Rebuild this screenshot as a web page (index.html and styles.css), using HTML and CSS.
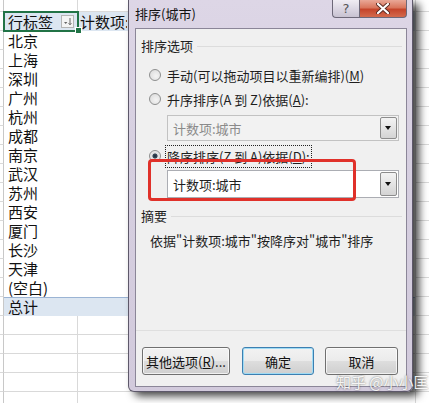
FILE: index.html
```html
<!DOCTYPE html>
<html lang="zh-CN">
<head>
    <meta charset="UTF-8">
    <title>排序(城市)</title>
    <link rel="stylesheet" href="styles.css">
</head>
<body>
    <div class="sheet">
        <div class="row grid top"><div class="c0"></div><div class="ca"></div><div class="cb"></div><div class="cc"></div></div>
        <div class="row head">
            <div class="c0"></div>
            <div class="ca sel">行标签
                <span class="filter">
                    <svg width="13" height="13" viewBox="0 0 13 13">
                        <rect x="0.5" y="0.5" width="12" height="12" fill="#f4f4f4" stroke="#b5b5b5"/>
                        <path d="M3 7h3.4L4.7 9z" fill="#666"/>
                        <path d="M9 3v6.5M7.6 8.2L9 9.8l1.4-1.6" stroke="#666" fill="none"/>
                    </svg>
                </span>
            </div>
            <div class="cb"><span class="clip">计数项:</span></div><div class="cc"></div>
        </div>
        <div class="row item"><div class="c0"></div><div class="ca">北京</div><div class="cb"></div><div class="cc"></div></div>
        <div class="row item"><div class="c0"></div><div class="ca">上海</div><div class="cb"></div><div class="cc"></div></div>
        <div class="row item"><div class="c0"></div><div class="ca">深圳</div><div class="cb"></div><div class="cc"></div></div>
        <div class="row item"><div class="c0"></div><div class="ca">广州</div><div class="cb"></div><div class="cc"></div></div>
        <div class="row item"><div class="c0"></div><div class="ca">杭州</div><div class="cb"></div><div class="cc"></div></div>
        <div class="row item"><div class="c0"></div><div class="ca">成都</div><div class="cb"></div><div class="cc"></div></div>
        <div class="row item"><div class="c0"></div><div class="ca">南京</div><div class="cb"></div><div class="cc"></div></div>
        <div class="row item"><div class="c0"></div><div class="ca">武汉</div><div class="cb"></div><div class="cc"></div></div>
        <div class="row item"><div class="c0"></div><div class="ca">苏州</div><div class="cb"></div><div class="cc"></div></div>
        <div class="row item"><div class="c0"></div><div class="ca">西安</div><div class="cb"></div><div class="cc"></div></div>
        <div class="row item"><div class="c0"></div><div class="ca">厦门</div><div class="cb"></div><div class="cc"></div></div>
        <div class="row item"><div class="c0"></div><div class="ca">长沙</div><div class="cb"></div><div class="cc"></div></div>
        <div class="row item"><div class="c0"></div><div class="ca">天津</div><div class="cb"></div><div class="cc"></div></div>
        <div class="row item"><div class="c0"></div><div class="ca">(空白)</div><div class="cb"></div><div class="cc"></div></div>
        <div class="row total"><div class="c0"></div><div class="ca">总计</div><div class="cb"></div><div class="cc"></div></div>
        <div class="row grid"><div class="c0"></div><div class="ca"></div><div class="cb"></div><div class="cc"></div></div>
        <div class="row grid"><div class="c0"></div><div class="ca"></div><div class="cb"></div><div class="cc"></div></div>
        <div class="row grid"><div class="c0"></div><div class="ca"></div><div class="cb"></div><div class="cc"></div></div>
        <div class="row grid"><div class="c0"></div><div class="ca"></div><div class="cb"></div><div class="cc"></div></div>
        <div class="row grid"><div class="c0"></div><div class="ca"></div><div class="cb"></div><div class="cc"></div></div>
    </div>

    <div class="dialog">
        <div class="titlebar">
            <span class="title">排序(城市)</span>
            <div class="caps">
                <span class="cap-help">?</span>
                <span class="cap-close">
                    <svg width="14" height="11" viewBox="0 0 14 11">
                        <path d="M2 1l10 9M12 1L2 10" stroke="#5a2a22" stroke-width="4" stroke-linecap="round"/>
                        <path d="M2 1l10 9M12 1L2 10" stroke="#fff" stroke-width="2.2" stroke-linecap="round"/>
                    </svg>
                </span>
            </div>
        </div>
        <div class="client">
            <div class="group-head"><span>排序选项</span><i class="rule"></i></div>
            <div class="radio first"><span class="dot"></span>手动(可以拖动项目以重新编排)(<u>M</u>)</div>
            <div class="radio"><span class="dot"></span>升序排序(A 到 Z)依据(<u>A</u>):</div>
            <div class="combo disabled"><span class="value">计数项:城市</span><span class="drop"></span></div>
            <div class="radio"><span class="dot checked"></span><span class="focus">降序排序(Z 到 A)依据(<u>D</u>):</span></div>
            <div class="combo big"><span class="value">计数项:城市</span><span class="drop"></span></div>
            <div class="group-head summary-head"><span>摘要</span><i class="rule"></i></div>
            <p class="summary">依据"计数项:城市"按降序对"城市"排序</p>
            <div class="footer">
                <button class="btn wide">其他选项(<u>R</u>)...</button>
                <button class="btn default">确定</button>
                <button class="btn">取消</button>
            </div>
            <div class="highlight"></div>
        </div>
    </div>

    <div class="watermark">知乎 @小小匡</div>
</body>
</html>
```

FILE: styles.css
```css
:root {
    --grid: #d9d9d9;
    --pivot-blue: #dce6f1;
    --excel-green: #217346;
    --dlg-bg: #f0f0f0;
    --dlg-text: #1e1e1e;
}

body {
    margin: 0;
    width: 429px;
    height: 403px;
    overflow: hidden;
    position: relative;
    background: #fff;
    font-family: "Noto Sans CJK SC", "Noto Sans", sans-serif;
}

/* spreadsheet behind the dialog */
.sheet {
    display: flex;
    flex-direction: column;
}

.row {
    display: flex;
    height: 19px;
    font-size: 15px;
    line-height: 19px;
    color: #111;
}

.row > div {
    box-sizing: border-box;
}

.row.top {
    height: 12px;
}

.c0 {
    width: 4px;
    border-right: 1px solid #c8c8c8;
    border-bottom: 1px solid var(--grid);
}

.ca {
    width: 74px;
    padding-left: 4px;
    white-space: nowrap;
    position: relative;
}

.cb {
    flex: 1;
    padding-left: 2px;
    white-space: nowrap;
    overflow: hidden;
}

.clip {
    display: inline-block;
    width: 47px;
    overflow: hidden;
    vertical-align: top;
}

.cc {
    width: 14px;
    border-left: 1px solid var(--grid);
    border-bottom: 1px solid var(--grid);
}

.grid .ca {
    border-right: 1px solid var(--grid);
    border-bottom: 1px solid var(--grid);
}

.grid .cb {
    border-bottom: 1px solid var(--grid);
}

.head .ca,
.head .cb {
    background: var(--pivot-blue);
}

.sel {
    outline: 2px solid var(--excel-green);
    outline-offset: -1px;
}

.sel::after {
    content: "";
    position: absolute;
    right: -4px;
    bottom: -3px;
    width: 5px;
    height: 5px;
    background: var(--excel-green);
    border: 1px solid #fff;
}

.filter {
    position: absolute;
    right: 4px;
    top: 3px;
    width: 13px;
    height: 13px;
}

.filter svg {
    display: block;
}

.total .ca,
.total .cb {
    background: var(--pivot-blue);
    border-top: 1px solid #9bb4d4;
    line-height: 17px;
}

/* dialog window */
.dialog {
    position: absolute;
    left: 128px;
    top: 0;
    width: 285px;
    height: 392px;
    box-sizing: border-box;
    padding: 0 5px 4px 6px;
    display: flex;
    flex-direction: column;
    background: linear-gradient(180deg, #ddd6e6 0%, #d6cfe0 40%, #d2cadc 100%);
    border: 1px solid #5d586a;
    border-top: 0;
    border-radius: 0 0 6px 6px;
    box-shadow: 6px 4px 8px rgba(0, 0, 0, 0.75);
}

.titlebar {
    height: 28px;
    display: flex;
    align-items: flex-start;
    flex-shrink: 0;
}

.title {
    font-size: 13px;
    line-height: 28px;
    color: #111;
}

.caps {
    margin-left: auto;
    display: flex;
}

.cap-help,
.cap-close {
    height: 18px;
    box-sizing: border-box;
    display: flex;
    align-items: center;
    justify-content: center;
    border: 1px solid #6d6878;
    border-top: 0;
}

.cap-help {
    width: 27px;
    border-right: 0;
    border-radius: 0 0 0 4px;
    background: linear-gradient(180deg, #f0edf3 0%, #dcd7e3 50%, #c8c2d1 100%);
    color: #555;
    font-size: 13px;
    font-family: "DejaVu Sans", sans-serif;
}

.cap-close {
    width: 48px;
    border-radius: 0 0 4px 0;
    background: linear-gradient(180deg, #e9a897 0%, #d9765d 45%, #c5452b 55%, #d46a4c 100%);
}

.client {
    flex: 1;
    position: relative;
    display: flex;
    flex-direction: column;
    background: var(--dlg-bg);
    border: 1px solid #8b8698;
    font-size: 13px;
    color: var(--dlg-text);
}

.group-head {
    display: flex;
    align-items: center;
    height: 18px;
    margin-top: 8px;
    padding-left: 5px;
    line-height: 18px;
}

.rule {
    flex: 1;
    height: 1px;
    margin: 0 4px;
    background: #dcdcdc;
}

.radio {
    display: flex;
    align-items: center;
    height: 24px;
    padding-left: 13px;
    white-space: nowrap;
}

.radio.first {
    margin-top: 8px;
}

.dot {
    width: 12px;
    height: 12px;
    box-sizing: border-box;
    margin-right: 6px;
    border: 1px solid #8e8f8f;
    border-radius: 50%;
    background: radial-gradient(circle at 60% 60%, #f4f4f4 0%, #d8d8d8 100%);
}

.dot.checked {
    background: radial-gradient(circle, #1d2b38 0%, #3a4a5a 30%, #e0e0e0 42%, #f2f2f2 100%);
}

.focus {
    outline: 1px dotted #222;
    outline-offset: 1px;
}

.combo {
    display: flex;
    align-items: center;
    height: 26px;
    margin: 4px 7px 0 31px;
    box-sizing: border-box;
    border: 1px solid #abadb3;
    background: #fff;
}

.combo.disabled {
    background: #f2f2f2;
    border-color: #c2c2c2;
    color: #8a8a8a;
}

.combo.big {
    height: 28px;
    margin-top: 2px;
}

.combo + .radio {
    margin-top: 3px;
}

.value {
    flex: 1;
    padding-left: 5px;
}

.drop {
    width: 17px;
    align-self: stretch;
    margin: 1px;
    box-sizing: border-box;
    border: 1px solid #8c8c8c;
    border-radius: 2px;
    background: linear-gradient(180deg, #f3f3f3 0%, #e4e4e4 50%, #d4d4d4 100%);
    position: relative;
}

.drop::after {
    content: "";
    position: absolute;
    left: 4px;
    top: 50%;
    margin-top: -2px;
    border-left: 3.5px solid transparent;
    border-right: 3.5px solid transparent;
    border-top: 4px solid #111;
}

.summary-head {
    margin-top: 9px;
}

.summary {
    margin: 7px 0 0 14px;
    line-height: 18px;
}

.footer {
    margin-top: auto;
    display: flex;
    gap: 11px;
    padding: 16px 8px 11px 6px;
    border-top: 1px solid #dfdfdf;
}

.btn {
    height: 28px;
    width: 73px;
    padding: 0;
    font-family: inherit;
    font-size: 13px;
    color: #111;
    border: 1px solid #707070;
    border-radius: 3px;
    background: linear-gradient(180deg, #f2f2f2 0%, #ebebeb 48%, #dddddd 52%, #cfcfcf 100%);
    box-shadow: inset 0 0 0 1px rgba(255, 255, 255, 0.7);
}

.btn.wide {
    width: 88px;
    margin-right: 1px;
}

.btn.default {
    width: 72px;
    border-color: #3c7fb1;
    box-shadow: inset 0 0 0 1px #9fdbf4;
}

.highlight {
    position: absolute;
    left: 12px;
    top: 130px;
    width: 208px;
    height: 42px;
    box-sizing: border-box;
    border: 3px solid #e0312a;
    border-radius: 4px;
}

.watermark {
    position: absolute;
    left: 336px;
    top: 371px;
    font-size: 15px;
    color: rgba(255, 255, 255, 0.92);
    text-shadow: 0 0 2px rgba(60, 60, 60, 0.8);
    white-space: nowrap;
}
```
